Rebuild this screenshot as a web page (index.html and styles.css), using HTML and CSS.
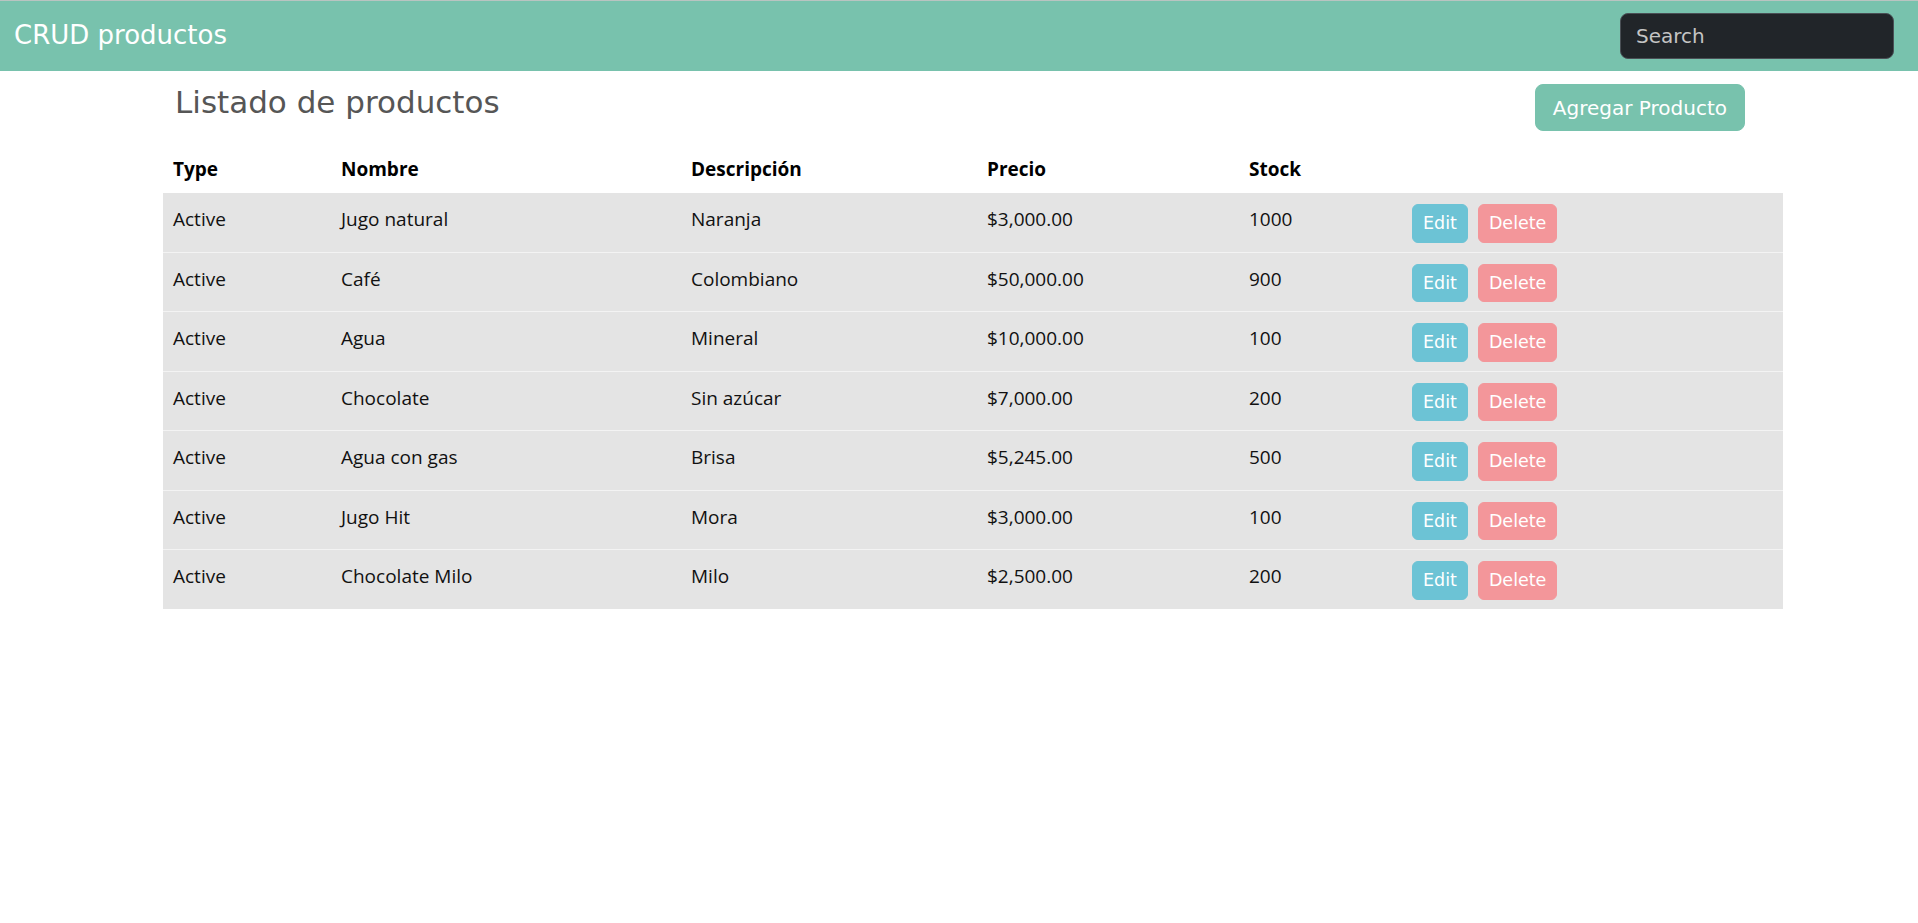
FILE: index.html
```html
<!DOCTYPE html>
<html lang="es">
<head>
<meta charset="utf-8">
<title>CRUD productos</title>
<link rel="stylesheet" href="styles.css">
</head>
<body>
<nav class="navbar">
  <a class="brand" href="#">CRUD productos</a>
  <input class="search" type="text" placeholder="Search">
</nav>
<main class="main">
  <div class="head-row">
    <h3 class="title">Listado de productos</h3>
    <button class="btn btn-primary">Agregar Producto</button>
  </div>
  <table class="table">
    <colgroup>
      <col class="c-type"><col class="c-name"><col class="c-desc"><col class="c-price"><col class="c-stock"><col class="c-act">
    </colgroup>
    <thead>
      <tr><th>Type</th><th>Nombre</th><th>Descripción</th><th>Precio</th><th>Stock</th><th></th></tr>
    </thead>
    <tbody>
      <tr><td>Active</td><td>Jugo natural</td><td>Naranja</td><td>$3,000.00</td><td>1000</td><td class="actions"><button class="btn-sm btn-info">Edit</button><button class="btn-sm btn-secondary">Delete</button></td></tr>
      <tr><td>Active</td><td>Café</td><td>Colombiano</td><td>$50,000.00</td><td>900</td><td class="actions"><button class="btn-sm btn-info">Edit</button><button class="btn-sm btn-secondary">Delete</button></td></tr>
      <tr><td>Active</td><td>Agua</td><td>Mineral</td><td>$10,000.00</td><td>100</td><td class="actions"><button class="btn-sm btn-info">Edit</button><button class="btn-sm btn-secondary">Delete</button></td></tr>
      <tr><td>Active</td><td>Chocolate</td><td>Sin azúcar</td><td>$7,000.00</td><td>200</td><td class="actions"><button class="btn-sm btn-info">Edit</button><button class="btn-sm btn-secondary">Delete</button></td></tr>
      <tr><td>Active</td><td>Agua con gas</td><td>Brisa</td><td>$5,245.00</td><td>500</td><td class="actions"><button class="btn-sm btn-info">Edit</button><button class="btn-sm btn-secondary">Delete</button></td></tr>
      <tr><td>Active</td><td>Jugo Hit</td><td>Mora</td><td>$3,000.00</td><td>100</td><td class="actions"><button class="btn-sm btn-info">Edit</button><button class="btn-sm btn-secondary">Delete</button></td></tr>
      <tr><td>Active</td><td>Chocolate Milo</td><td>Milo</td><td>$2,500.00</td><td>200</td><td class="actions"><button class="btn-sm btn-info">Edit</button><button class="btn-sm btn-secondary">Delete</button></td></tr>
    </tbody>
  </table>
</main>
</body>
</html>
```

FILE: styles.css
```css
* { box-sizing: border-box; }
html, body { margin: 0; padding: 0; background: #fff; }
body {
  font-family: "Open Sans", "Noto Sans", sans-serif;
  font-size: 19px;
  color: #111;
}
.navbar {
  height: 71px;
  border-top: 1px solid #b9c4c1;
  background: #78c2ad;
  display: flex;
  align-items: center;
  justify-content: space-between;
  padding: 0 24px 0 14px;
}
.brand {
  font-family: "DejaVu Sans", sans-serif;
  font-size: 26px;
  line-height: 37.5px;
  color: #fff;
  text-decoration: none;
}
.search {
  width: 274px;
  height: 46px;
  background: #212529;
  border: 1px solid #4a4f55;
  border-radius: 8px;
  padding: 0 15px;
  font-family: "DejaVu Sans", sans-serif;
  font-size: 20px;
  color: #ddd;
  outline: none;
}
.search::placeholder { color: #c4c4c4; }
.main {
  padding: 13px 135px 0 163px;
}
.head-row {
  display: flex;
  justify-content: space-between;
  align-items: flex-start;
  padding: 0 38px 0 12px;
}
.title {
  margin: 0;
  font-family: "DejaVu Sans", sans-serif;
  font-weight: 400;
  font-size: 31px;
  line-height: 36px;
  color: #565656;
}
.btn {
  font-family: "DejaVu Sans", sans-serif;
  font-size: 20px;
  line-height: 30px;
  padding: 7.5px 17px;
  border: 1px solid transparent;
  border-radius: 8px;
  color: #fff;
  cursor: pointer;
}
.btn-primary { background: #78c2ad; border-color: #78c2ad; }
.table {
  width: 1620px;
  margin-top: 12px;
  border-collapse: collapse;
  table-layout: fixed;
}
.c-type { width: 168px; }
.c-name { width: 350px; }
.c-desc { width: 296px; }
.c-price { width: 262px; }
.c-stock { width: 163px; }
.c-act { width: 381px; }
.table th, .table td {
  padding: 11px 10px 9px;
  text-align: left;
  vertical-align: top;
  line-height: 30px;
}
.table th {
  font-weight: 700;
  color: #000;
}
.table tbody tr {
  background: #e4e4e4;
  border-top: 1px solid #f3f3f3;
}
.table tbody tr:first-child { border-top: 0; }
.actions {
  display: flex;
  gap: 10px;
  padding-top: 11px !important;
  padding-bottom: 9px !important;
}
.btn-sm {
  font-family: "DejaVu Sans", sans-serif;
  font-size: 17.5px;
  line-height: 26.5px;
  padding: 5px 10px;
  border: 1px solid transparent;
  border-radius: 6px;
  color: #fff;
  cursor: pointer;
}
.btn-info { background: #6cc3d5; border-color: #6cc3d5; }
.btn-secondary { background: #f3969a; border-color: #f3969a; }
```
